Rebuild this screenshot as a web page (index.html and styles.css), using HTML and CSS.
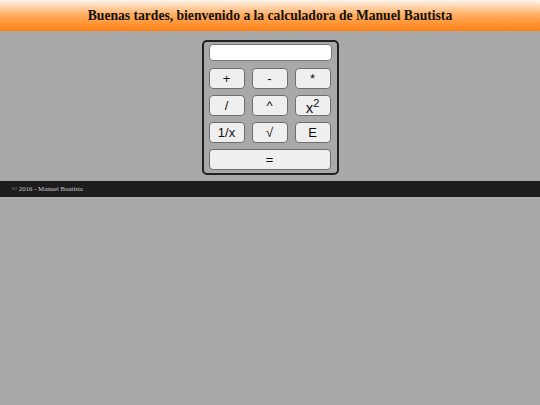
FILE: index.html
```html
<!DOCTYPE html>
<html lang="es">
<head>
  <meta charset="UTF-8" />
  <title>Calculadora</title>
  <link rel="stylesheet" href="styles.css">
</head>
<body>
  <header class="top">
    <h1>Buenas tardes, bienvenido a la calculadora de Manuel Bautista</h1>
  </header>

  <div class="calc">
    <input class="display" type="text" />
    <div class="keys">
      <button>+</button>
      <button>-</button>
      <button>*</button>
      <button>/</button>
      <button>^</button>
      <button class="square">x<sup>2</sup></button>
      <button>1/x</button>
      <button>&radic;</button>
      <button>E</button>
      <button class="equals">=</button>
    </div>
  </div>

  <footer class="bottom">&copy; 2016 - Manuel Bautista</footer>
</body>
</html>
```

FILE: styles.css
```css
body {
  margin: 0;
  background: #a9a9a9;
  font-family: "Liberation Serif", serif;
}

.top {
  height: 31px;
  background: linear-gradient(to bottom, #fff6ee, #ffb066 45%, #ff7f10);
  display: flex;
  align-items: center;
  justify-content: center;
}

.top h1 {
  margin: 0;
  font-size: 13.6px;
  font-weight: bold;
  color: #111;
}

.calc {
  width: 123px;
  margin: 9px auto 0;
  padding: 2px 5px 3px;
  border: 2px solid #222;
  border-radius: 5px;
  background: #a9a9a9;
}

.display {
  display: block;
  box-sizing: border-box;
  width: 123px;
  height: 17px;
  margin: 0;
  border: 1px solid #777;
  border-radius: 4px;
  background: #fff;
}

.keys {
  display: grid;
  grid-template-columns: repeat(3, 36px);
  grid-auto-rows: 21px;
  column-gap: 7px;
  row-gap: 6px;
  margin-top: 7px;
}

.keys button {
  margin: 0;
  padding: 0;
  border: 1px solid #6e6e6e;
  border-radius: 4px;
  background: #efefef;
  color: #111;
  font-family: "Liberation Sans", Arial, sans-serif;
  font-size: 13px;
  line-height: 1;
}

.keys .square {
  font-size: 15px;
  padding-top: 2px;
}

.keys .square sup {
  font-size: 11px;
  vertical-align: 6px;
}

.keys .equals {
  grid-column: 1 / 4;
}

.bottom {
  margin-top: 6px;
  height: 16px;
  background: #1c1c1c;
  color: #ccc;
  font-size: 6.8px;
  line-height: 16px;
  padding-left: 12px;
}
```
